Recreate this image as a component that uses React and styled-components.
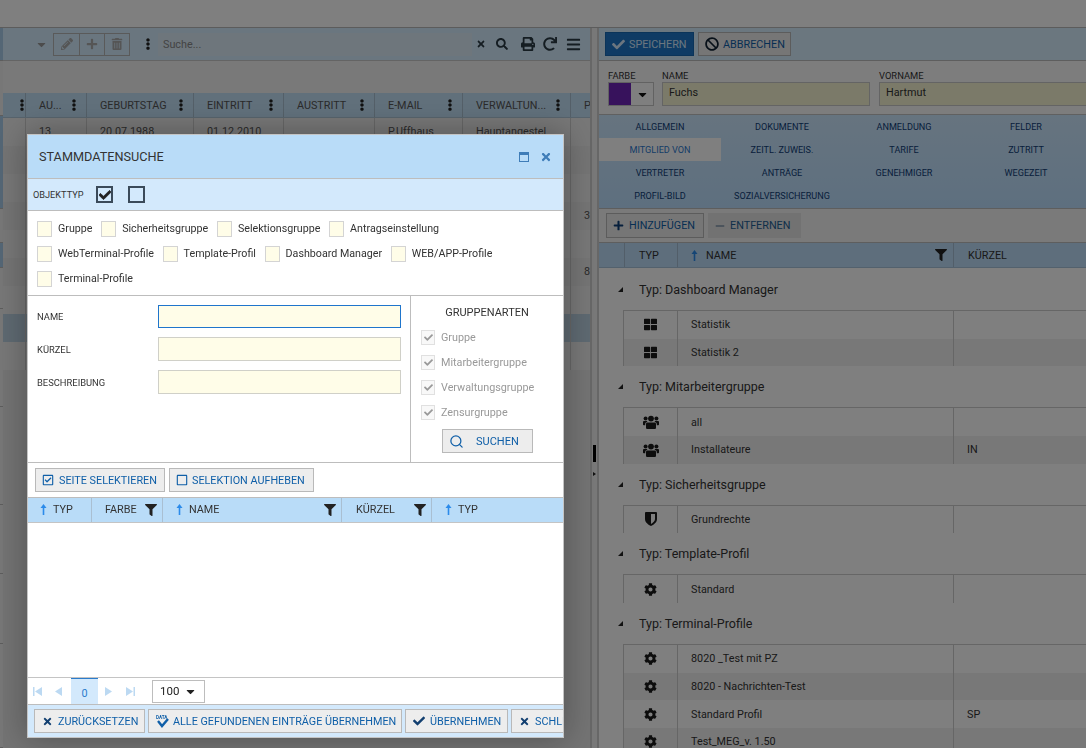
import React from 'react';
import styled, { createGlobalStyle } from 'styled-components';
import {
  FaBan, FaBars, FaCaretDown, FaCheck, FaCog, FaEllipsisV, FaFilter, FaMinus, FaPencilAlt, FaPlus,
  FaPrint, FaRegSquare, FaSearch, FaThLarge, FaTimes, FaTrashAlt, FaRedo, FaRegCheckSquare,
} from 'react-icons/fa';
import { FiSearch } from 'react-icons/fi';

const GlobalStyle = createGlobalStyle`
  html, body { margin: 0; padding: 0; height: 100%; overflow: hidden; }
  body { font-family: Roboto, "Liberation Sans", sans-serif; font-size: 10.8px; color: #333; background: #fff; }
  * { box-sizing: border-box; }
`;

const Page = styled.div`
  width: 1086px;
  height: 748px;
  display: flex;
  flex-direction: column;
  overflow: hidden;
`;

const TopBar = styled.div`
  height: 28px;
  flex: none;
  background: #fff;
  border-bottom: 1px solid #b8b8b8;
`;

const Main = styled.div`
  flex: 1;
  display: flex;
  min-height: 0;
`;

/* linke Seite */
const Rail = styled.div`
  width: 3px;
  flex: none;
  display: flex;
  flex-direction: column;
`;

const RailItem = styled.div`
  flex: none;
  height: ${(p) => p.$h}px;
  background: ${(p) => (p.$on ? '#a9cdea' : '#eee')};
  border-bottom: 1px solid #bbb;
`;

const LeftPane = styled.div`
  width: 587px;
  flex: none;
  display: flex;
  flex-direction: column;
  overflow: hidden;
`;

const LeftToolbar = styled.div`
  height: 33px;
  flex: none;
  display: flex;
  align-items: center;
  background: #d4edff;
  border-bottom: 1px solid #c8c8c8;
  color: #222;
`;

const Caret = styled.div`
  width: 50px;
  padding-left: 32px;
  color: #999;
  display: flex;
  font-size: 13px;
`;

const ToolGroup = styled.div`
  display: flex;
  border: 1px solid #b5b5b5;
  height: 23px;
`;

const ToolBtn = styled.div`
  width: 25px;
  display: flex;
  align-items: center;
  justify-content: center;
  color: #aaa;
  font-size: 12px;
  & + & { border-left: 1px solid #b5b5b5; }
`;

const Kebab = styled(FaEllipsisV)`
  font-size: 12px;
  color: #222;
  flex: none;
`;

const KebabSlot = styled.div`
  width: 28px;
  padding-right: 4px;
  display: flex;
  justify-content: flex-end;
  flex: none;
`;

const SearchBox = styled.div`
  width: 314px;
  height: 23px;
  padding-left: 5px;
  display: flex;
  align-items: center;
  background: #dcecf8;
  color: #888;
`;

const ToolIcons = styled.div`
  display: flex;
  align-items: center;
  color: #2a3a45;
`;

const ToolIcon = styled.span`
  width: ${(p) => p.$w}px;
  display: flex;
  justify-content: center;
  font-size: ${(p) => p.$size || 14}px;
`;

const LeftSpacer = styled.div`
  height: 32px;
  flex: none;
  background: #f2f2f2;
`;

const LeftRow = styled.div`
  height: ${(p) => p.$h || 28}px;
  flex: none;
  display: grid;
  grid-template-columns: 22px 61px 107px 90px 91px 88px 108px 20px;
  background: ${(p) => (p.$selected ? '#bcd2e2' : p.$alt ? '#e8e8e8' : '#eeeeee')};
`;

const LeftHead = styled(LeftRow)`
  background: #c2e0f6;
  border-bottom: 1px solid #aec6d8;
`;

const LeftHeadCell = styled.div`
  display: flex;
  align-items: center;
  justify-content: space-between;
  padding: 0 6px 0 13px;
  border-left: ${(p) => (p.$first ? 'none' : '1px solid #a8bfd0')};
  color: #555;
  overflow: hidden;
  white-space: nowrap;
`;

const LeftCell = styled.div`
  padding: 0 0 0 13px;
  line-height: 27px;
  border-left: ${(p) => (p.$first ? 'none' : '1px solid #cccccc')};
  color: #555;
  overflow: hidden;
  white-space: nowrap;
`;

const LeftRest = styled.div`
  flex: 1;
  background: #e6e6e6;
`;

const Splitter = styled.div`
  width: 9px;
  flex: none;
  padding-top: 417px;
  display: flex;
  flex-direction: column;
  align-items: center;
  gap: 10px;
  background: #f0f0f0;
  border-left: 2px solid #cfcfcf;
  border-right: 2px solid #cfcfcf;
`;

const Handle = styled.div`
  width: 3px;
  height: 17px;
  background: #000;
`;

const SplitArrow = styled.div`
  width: 0;
  height: 0;
  border-left: 3px solid #222;
  border-top: 2px solid transparent;
  border-bottom: 2px solid transparent;
`;

/* rechte Seite */
const RightPane = styled.div`
  flex: 1;
  min-width: 0;
  display: flex;
  flex-direction: column;
  overflow: hidden;
  background: #fff;
`;

const ActionBar = styled.div`
  height: ${(p) => p.$h}px;
  flex: none;
  display: flex;
  align-items: center;
  gap: 4px;
  padding-left: ${(p) => p.$pad}px;
  background: ${(p) => p.$bg};
  border-bottom: 1px solid #bcbcbc;
`;

const Button = styled.div`
  height: ${(p) => p.$h || 24}px;
  width: ${(p) => (p.$w ? `${p.$w}px` : 'auto')};
  flex: none;
  display: flex;
  align-items: center;
  gap: ${(p) => p.$gap || 5}px;
  padding: 0 6px;
  font-size: ${(p) => p.$size || 10.8}px;
  white-space: nowrap;
  color: ${(p) => (p.$primary ? '#d8ecff' : p.$muted ? '#1d5e94' : '#0f5fa8')};
  background: ${(p) => (p.$primary ? '#1f77c8' : p.$muted ? '#e4e4e4' : '#ededed')};
  border: 1px solid ${(p) => (p.$primary ? '#1768b3' : p.$muted ? '#e4e4e4' : '#b9b9b9')};
  svg { flex: none; }
`;

const FieldsRow = styled.div`
  height: 54px;
  flex: none;
  display: flex;
  padding: 8px 0 0 9px;
  background: #fbfbfb;
  border-bottom: 1px solid #c0c0c0;
`;

const Field = styled.div`
  width: ${(p) => p.$w}px;
  margin-right: ${(p) => p.$mr || 0}px;
  flex: none;
`;

const FieldLabel = styled.div`
  font-size: 9.4px;
  line-height: 12px;
  height: 12px;
  margin-top: 1px;
  color: #333;
`;

const ColorPick = styled.div`
  height: 24px;
  display: flex;
  border: 1px solid #c4c4c4;
  background: #fff;
`;

const Swatch = styled.div`
  width: 22px;
  background: #6e25b8;
`;

const PickArrow = styled.div`
  flex: 1;
  display: flex;
  align-items: center;
  justify-content: center;
  font-size: 13px;
  color: #111;
`;

const ValueInput = styled.div`
  height: 24px;
  padding-left: 6px;
  line-height: 20px;
  color: #333;
  background: #f6f5d2;
  border: 1px solid #c8c8c8;
`;

const Tabs = styled.div`
  height: 94px;
  flex: none;
  display: grid;
  grid-template-columns: repeat(4, 122px);
  grid-template-rows: 23px 23px 23px 24px;
  background: linear-gradient(#cde8ff, #bcdfff);
  border-bottom: 1px solid #bcbcbc;
`;

const Tab = styled.div`
  display: flex;
  align-items: center;
  justify-content: center;
  font-size: 9.1px;
  white-space: nowrap;
  color: ${(p) => (p.$active ? '#2c7ad0' : '#103e78')};
  background: ${(p) => (p.$active ? '#fff' : 'transparent')};
`;

const GroupHead = styled.div`
  height: 25px;
  flex: none;
  display: grid;
  grid-template-columns: 25px 53px 276px 1fr;
  background: #bcdcf8;
  border-bottom: 1px solid #a7c3da;
`;

const GroupHeadCell = styled.div`
  display: flex;
  align-items: center;
  gap: 8px;
  padding-left: ${(p) => p.$pad || 0}px;
  border-left: ${(p) => (p.$first ? 'none' : '1px solid #a4bdd2')};
  color: #333;
`;

const SortArrow = styled.svg`
  width: 7px;
  height: 11px;
  flex: none;
  color: #2b8bea;
`;

const FilterIcon = styled(FaFilter)`
  font-size: 12px;
  color: #222;
  margin-left: auto;
  margin-right: ${(p) => p.$mr || 5}px;
  flex: none;
`;

const GroupList = styled.div`
  flex: 1;
  padding: 1px 0 0 24px;
  overflow: hidden;
`;

const GroupTitle = styled.div`
  height: 41px;
  display: flex;
  align-items: center;
  gap: 16px;
  margin-left: -5px;
  font-size: 12.5px;
  color: #333;
`;

const Collapse = styled.div`
  width: 0;
  height: 0;
  border-bottom: 5px solid #222;
  border-left: 5px solid transparent;
`;

const GroupTable = styled.div`
  border-top: 1px solid #cdcdcd;
`;

const DataRow = styled.div`
  height: 27.67px;
  display: grid;
  grid-template-columns: 54px 276px 1fr;
  background: ${(p) => (p.$alt ? '#f1f1f1' : '#fff')};
`;

const DataCell = styled.div`
  display: flex;
  align-items: center;
  justify-content: ${(p) => (p.$center ? 'center' : 'flex-start')};
  padding-left: ${(p) => (p.$center ? 0 : 13)}px;
  border-left: 1px solid #cdcdcd;
  color: #333;
  white-space: nowrap;
`;

const RowIcon = styled.span`
  display: flex;
  font-size: 13px;
  color: #1a1a1a;
`;

/* Dialog */
const Overlay = styled.div`
  position: fixed;
  inset: 0;
  background: rgba(0, 0, 0, 0.5);
`;

const Modal = styled.div`
  position: fixed;
  left: 27px;
  top: 134px;
  width: 537px;
  height: 604px;
  display: flex;
  flex-direction: column;
  background: #fff;
  border: 1px solid #c4c4c4;
  box-shadow: 0 0 30px rgba(0, 0, 0, 0.3);
  overflow: hidden;
`;

const ModalTitle = styled.div`
  height: 44px;
  flex: none;
  display: flex;
  align-items: center;
  padding: 0 11px;
  background: #b9dcf8;
  border-bottom: 1px solid #bdbdbd;
  font-size: 12.7px;
  color: #333;
`;

const TitleName = styled.div`
  flex: 1;
`;

const TitleIcons = styled.div`
  display: flex;
  align-items: center;
  gap: 11px;
  color: #3f7db8;
`;

const TypeRow = styled.div`
  height: 32px;
  flex: none;
  display: flex;
  align-items: center;
  padding-left: 5px;
  background: #d3e9fc;
  border-bottom: 1px solid #bdbdbd;
  font-size: 9.2px;
  color: #333;
`;

const TypeLabel = styled.div`
  width: 63px;
`;

const TypeBox = styled.div`
  width: 17px;
  height: 17px;
  margin-right: 15px;
  display: flex;
  align-items: center;
  justify-content: center;
  border: 2px solid #3a4a5a;
  font-size: 12px;
  color: #222;
  svg { stroke: currentColor; stroke-width: 30; }
`;

const TypeChecks = styled.div`
  height: 85px;
  flex: none;
  padding: 5px 9px 0;
  display: flex;
  flex-wrap: wrap;
  align-content: flex-start;
  gap: 0 8.7px;
  border-bottom: 1px solid #bdbdbd;
`;

const TypeCheck = styled.div`
  height: 25px;
  display: flex;
  align-items: center;
  gap: 6px;
  font-size: 10.7px;
  color: #333;
  white-space: nowrap;
`;

const Break = styled.div`
  flex-basis: 100%;
`;

const YellowBox = styled.div`
  width: 15px;
  height: 16px;
  flex: none;
  background: #fffde8;
  border: 1px solid #d4d4d4;
`;

const SearchArea = styled.div`
  height: 167px;
  flex: none;
  display: flex;
  border-bottom: 1px solid #bdbdbd;
`;

const SearchFields = styled.div`
  width: 383px;
  flex: none;
  padding: 9px 9px 0;
  display: flex;
  flex-direction: column;
  gap: 9px;
  border-right: 1px solid #bdbdbd;
`;

const SearchRow = styled.div`
  display: flex;
  align-items: center;
  font-size: 9.4px;
  color: #333;
`;

const SearchLabel = styled.div`
  width: 121px;
`;

const SearchInput = styled.div`
  width: 243px;
  height: ${(p) => (p.$focus ? 23 : 24)}px;
  background: #fffde8;
  border: 1px solid ${(p) => (p.$focus ? '#1f75cc' : '#d0d0c8')};
`;

const GroupTypes = styled.div`
  flex: 1;
  padding: 10px 10px 0;
  display: flex;
  flex-direction: column;
`;

const GroupTypesTitle = styled.div`
  text-align: center;
  margin-bottom: 6px;
  color: #333;
  font-size: 11px;
  line-height: 13px;
`;

const GroupType = styled.div`
  height: 25px;
  display: flex;
  align-items: center;
  gap: 6px;
  color: #999;
`;

const DisabledBox = styled.div`
  width: 14px;
  height: 15px;
  display: flex;
  align-items: center;
  justify-content: center;
  font-size: 9px;
  color: #999;
  background: #f8f8f8;
  border: 1px solid #e0e0e0;
`;

const SearchButton = styled(Button)`
  margin: 4px 0 0 21px;
  padding-left: 6px;
`;

const SelectBar = styled.div`
  height: 35px;
  flex: none;
  display: flex;
  align-items: center;
  gap: 4px;
  padding-left: 7px;
  border-bottom: 1px solid #bdbdbd;
`;

const ResultHead = styled.div`
  height: 25px;
  flex: none;
  display: grid;
  grid-template-columns: 63px 71px 179px 90px 1fr;
  background: #b9dcf8;
  border-bottom: 1px solid #c4c4c4;
`;

const ResultCell = styled.div`
  display: flex;
  align-items: center;
  gap: 6px;
  padding: 0 0 1px ${(p) => p.$pad}px;
  border-left: ${(p) => (p.$first ? 'none' : '1px solid #a9bfd2')};
  color: #333;
`;

const ResultBody = styled.div`
  flex: 1;
  border-bottom: 1px solid #c4c4c4;
`;

const Pager = styled.div`
  height: 27px;
  flex: none;
  display: flex;
  align-items: center;
  padding-left: 5px;
  border-bottom: 1px solid #bdbdbd;
`;

const PageIcon = styled.svg`
  width: 9px;
  height: 9px;
  flex: none;
  fill: #bcd9f2;
  margin-right: ${(p) => p.$mr}px;
`;

const PageCurrent = styled.div`
  width: 27px;
  height: 26px;
  margin-right: 6px;
  padding-top: 3px;
  display: flex;
  align-items: center;
  justify-content: center;
  flex: none;
  color: #2b7ccc;
  background: #d3e9fc;
  border-top: 1px solid #2b7ccc;
`;

const PageSize = styled.div`
  width: 53px;
  height: 23px;
  margin-left: 17px;
  padding: 0 7px;
  display: flex;
  align-items: center;
  justify-content: space-between;
  font-size: 11.5px;
  color: #222;
  border: 1px solid #bdbdbd;
`;

const Footer = styled.div`
  height: 32px;
  flex: none;
  display: flex;
  align-items: center;
  gap: 3px;
  padding-left: 6px;
  background: #d3e9fc;
  & > div { padding-left: 7px; }
`;

const DataBadge = styled.svg`
  width: 14px;
  height: 14px;
  flex: none;
  color: #0f5fa8;
`;

const Arrow = () => (
  <SortArrow viewBox="0 0 7 11">
    <path d="M3.5 0 L6.5 4 H4.3 V11 H2.7 V4 H0.5 Z" fill="currentColor" />
  </SortArrow>
);

const UsersIcon = () => (
  <svg width="16" height="14" viewBox="0 0 16 14" fill="currentColor">
    <circle cx="8" cy="3.6" r="2.9" />
    <circle cx="2.6" cy="3.4" r="2" />
    <circle cx="13.4" cy="3.4" r="2" />
    <path d="M4.2 7.4 H11.8 C12.6 7.4 13 8 13 9 V12.4 C13 13.3 12.4 14 11.6 14 H4.4 C3.6 14 3 13.3 3 12.4 V9 C3 8 3.4 7.4 4.2 7.4Z" />
    <path d="M0 7 C0 6.2 .6 5.9 1.2 5.9 H3.8 C4.4 6.4 4.6 6.6 4 6.9 C2.8 7.2 2.2 8 2.2 9.4 V10.2 H.8 C.3 10.2 0 9.9 0 9.4Z" />
    <path d="M16 7 C16 6.2 15.4 5.9 14.8 5.9 H12.2 C11.6 6.4 11.4 6.6 12 6.9 C13.2 7.2 13.8 8 13.8 9.4 V10.2 H15.2 C15.7 10.2 16 9.9 16 9.4Z" />
  </svg>
);

const ShieldIcon = () => (
  <svg width="12" height="14" viewBox="0 0 12 14" fill="currentColor">
    <path
      fillRule="evenodd"
      d="M1 0 H11 C11.5 0 12 .5 12 1 V7 C12 10.5 8.5 12.8 6 14 C3.5 12.8 0 10.5 0 7 V1 C0 .5 .5 0 1 0Z M6 2 V12 C8 10.8 10 9.2 10 7 V2Z"
    />
  </svg>
);

const leftCols = ['', 'AU...', 'GEBURTSTAG', 'EINTRITT', 'AUSTRITT', 'E-MAIL', 'VERWALTUN...', 'P'];
const leftRows = [
  ['', '13', '20.07.1988', '01.12.2010', '', 'P.Uffhaus', 'Hauptangestel', ''],
  [], [],
  ['', '', '', '', '', '', '', '3'],
  [],
  ['', '', '', '', '', '', '', '8'],
  [], [], [],
];
const railItems = [[33, true], [55, false], [93, true], [34, false], [25, true], [41, false], [98, false], [98, false], [69, false], [70, false], [104, false]];

const tabs = [
  'ALLGEMEIN', 'DOKUMENTE', 'ANMELDUNG', 'FELDER',
  'MITGLIED VON', 'ZEITL. ZUWEIS.', 'TARIFE', 'ZUTRITT',
  'VERTRETER', 'ANTRÄGE', 'GENEHMIGER', 'WEGEZEIT',
  'PROFIL-BILD', 'SOZIALVERSICHERUNG',
];

const groups = [
  { title: 'Typ: Dashboard Manager', icon: <FaThLarge />, rows: [['Statistik', ''], ['Statistik 2', '']] },
  { title: 'Typ: Mitarbeitergruppe', icon: <UsersIcon />, rows: [['all', ''], ['Installateure', 'IN']] },
  { title: 'Typ: Sicherheitsgruppe', icon: <ShieldIcon />, rows: [['Grundrechte', '']] },
  { title: 'Typ: Template-Profil', icon: <FaCog />, rows: [['Standard', '']] },
  {
    title: 'Typ: Terminal-Profile',
    icon: <FaCog />,
    rows: [['8020 _Test mit PZ', ''], ['8020 - Nachrichten-Test', ''], ['Standard Profil', 'SP'], ['Test_MEG_v. 1.50', '']],
  },
];

const typeRows = [
  ['Gruppe', 'Sicherheitsgruppe', 'Selektionsgruppe', 'Antragseinstellung'],
  ['WebTerminal-Profile', 'Template-Profil', 'Dashboard Manager', 'WEB/APP-Profile'],
  ['Terminal-Profile'],
];

const App = () => (
  <>
    <GlobalStyle />
    <Page>
      <TopBar />
      <Main>
        <Rail>
          {railItems.map(([h, on], i) => <RailItem key={i} $h={h} $on={on} />)}
        </Rail>
        <LeftPane>
          <LeftToolbar>
            <Caret><FaCaretDown /></Caret>
            <ToolGroup>
              <ToolBtn><FaPencilAlt /></ToolBtn>
              <ToolBtn><FaPlus /></ToolBtn>
              <ToolBtn><FaTrashAlt /></ToolBtn>
            </ToolGroup>
            <KebabSlot><Kebab /></KebabSlot>
            <SearchBox>Suche...</SearchBox>
            <ToolIcons>
              <ToolIcon $w={18} $size={10}><FaTimes /></ToolIcon>
              <ToolIcon $w={24} $size={12}><FaSearch /></ToolIcon>
              <ToolIcon $w={28}><FaPrint /></ToolIcon>
              <ToolIcon $w={16}><FaRedo /></ToolIcon>
              <ToolIcon $w={30} $size={15}><FaBars /></ToolIcon>
            </ToolIcons>
          </LeftToolbar>
          <LeftSpacer />
          <LeftHead $h={25}>
            {leftCols.map((c, i) => (
              <LeftHeadCell key={i} $first={i === 0}>
                {c}
                {i < 7 && <Kebab />}
              </LeftHeadCell>
            ))}
          </LeftHead>
          {leftRows.map((r, i) => (
            <LeftRow key={i} $alt={i % 2 === 1} $selected={i === 7}>
              {leftCols.map((_, j) => <LeftCell key={j} $first={j === 0}>{r[j] || ''}</LeftCell>)}
            </LeftRow>
          ))}
          <LeftRest />
        </LeftPane>
        <Splitter>
          <Handle />
          <SplitArrow />
        </Splitter>
        <RightPane>
          <ActionBar $h={33} $pad={6} $bg="#d6eeff">
            <Button $primary $w={89} $gap={4}><FaCheck size={13} />SPEICHERN</Button>
            <Button $w={93} $gap={4}><FaBan size={14} color="#123" />ABBRECHEN</Button>
          </ActionBar>
          <FieldsRow>
            <Field $w={46} $mr={8}>
              <FieldLabel>FARBE</FieldLabel>
              <ColorPick>
                <Swatch />
                <PickArrow><FaCaretDown /></PickArrow>
              </ColorPick>
            </Field>
            <Field $w={208} $mr={9}>
              <FieldLabel>NAME</FieldLabel>
              <ValueInput>Fuchs</ValueInput>
            </Field>
            <Field $w={260}>
              <FieldLabel>VORNAME</FieldLabel>
              <ValueInput>Hartmut</ValueInput>
            </Field>
          </FieldsRow>
          <Tabs>
            {tabs.map((t) => <Tab key={t} $active={t === 'MITGLIED VON'}>{t}</Tab>)}
          </Tabs>
          <ActionBar $h={34} $pad={7} $bg="#f4f4f4">
            <Button $w={98} $h={25}><FaPlus size={11} color="#0d3f78" />HINZUFÜGEN</Button>
            <Button $muted $w={93} $h={25}><FaMinus size={10} color="#98a8b8" />ENTFERNEN</Button>
          </ActionBar>
          <GroupHead>
            <GroupHeadCell $first />
            <GroupHeadCell $pad={14}>TYP</GroupHeadCell>
            <GroupHeadCell $pad={13}><Arrow />NAME<FilterIcon $mr={6} /></GroupHeadCell>
            <GroupHeadCell $pad={14}>KÜRZEL</GroupHeadCell>
          </GroupHead>
          <GroupList>
            {groups.map((g) => (
              <div key={g.title}>
                <GroupTitle><Collapse />{g.title}</GroupTitle>
                <GroupTable>
                  {g.rows.map(([name, short], i) => (
                    <DataRow key={name} $alt={i % 2 === 1}>
                      <DataCell $center><RowIcon>{g.icon}</RowIcon></DataCell>
                      <DataCell>{name}</DataCell>
                      <DataCell>{short}</DataCell>
                    </DataRow>
                  ))}
                </GroupTable>
              </div>
            ))}
          </GroupList>
        </RightPane>
      </Main>
    </Page>
    <Overlay />
    <Modal>
      <ModalTitle>
        <TitleName>STAMMDATENSUCHE</TitleName>
        <TitleIcons>
          <svg width="10" height="10" viewBox="0 0 10 10">
            <path d="M0 0H10V10H0Z M1 3V9H9V3Z" fill="currentColor" fillRule="evenodd" />
          </svg>
          <FaTimes size={12} />
        </TitleIcons>
      </ModalTitle>
      <TypeRow>
        <TypeLabel>OBJEKTTYP</TypeLabel>
        <TypeBox><FaCheck /></TypeBox>
        <TypeBox />
      </TypeRow>
      <TypeChecks>
        {typeRows.map((row, i) => (
          <React.Fragment key={i}>
            {row.map((t) => <TypeCheck key={t}><YellowBox />{t}</TypeCheck>)}
            <Break />
          </React.Fragment>
        ))}
      </TypeChecks>
      <SearchArea>
        <SearchFields>
          <SearchRow><SearchLabel>NAME</SearchLabel><SearchInput $focus /></SearchRow>
          <SearchRow><SearchLabel>KÜRZEL</SearchLabel><SearchInput /></SearchRow>
          <SearchRow><SearchLabel>BESCHREIBUNG</SearchLabel><SearchInput /></SearchRow>
        </SearchFields>
        <GroupTypes>
          <GroupTypesTitle>GRUPPENARTEN</GroupTypesTitle>
          {['Gruppe', 'Mitarbeitergruppe', 'Verwaltungsgruppe', 'Zensurgruppe'].map((t) => (
            <GroupType key={t}><DisabledBox><FaCheck /></DisabledBox>{t}</GroupType>
          ))}
          <SearchButton $w={91} $gap={12} $size={11}><FiSearch size={15} />SUCHEN</SearchButton>
        </GroupTypes>
      </SearchArea>
      <SelectBar>
        <Button $w={130}><FaRegCheckSquare size={12} />SEITE SELEKTIEREN</Button>
        <Button $w={145} $gap={4}><FaRegSquare size={12} />SELEKTION AUFHEBEN</Button>
      </SelectBar>
      <ResultHead>
        <ResultCell $first $pad={12}><Arrow />TYP</ResultCell>
        <ResultCell $pad={13}>FARBE<FilterIcon /></ResultCell>
        <ResultCell $pad={13}><Arrow />NAME<FilterIcon /></ResultCell>
        <ResultCell $pad={14}>KÜRZEL<FilterIcon /></ResultCell>
        <ResultCell $pad={13}><Arrow />TYP</ResultCell>
      </ResultHead>
      <ResultBody />
      <Pager>
        <PageIcon viewBox="0 0 9 9" $mr={12}><path d="M0 0H1.5V9H0Z M9 0V9L2 4.5Z" /></PageIcon>
        <PageIcon viewBox="0 0 9 9" $mr={8}><path d="M8 0V9L1 4.5Z" /></PageIcon>
        <PageCurrent>0</PageCurrent>
        <PageIcon viewBox="0 0 9 9" $mr={13}><path d="M1 0V9L8 4.5Z" /></PageIcon>
        <PageIcon viewBox="0 0 9 9" $mr={0}><path d="M0 0V9L7 4.5Z M7.5 0H9V9H7.5Z" /></PageIcon>
        <PageSize>100<FaCaretDown size={13} /></PageSize>
      </Pager>
      <Footer>
        <Button $w={111}><FaTimes size={11} color="#123f70" />ZURÜCKSETZEN</Button>
        <Button $w={254} $gap={3}>
          <DataBadge viewBox="0 0 14 14">
            <text x="0" y="4.5" fontSize="4.6" fontWeight="700" fontFamily="Roboto" fill="currentColor">DATA</text>
            <path d="M2 7 L6 12 L12 5" fill="none" stroke="currentColor" strokeWidth="2.4" />
          </DataBadge>
          ALLE GEFUNDENEN EINTRÄGE ÜBERNEHMEN
        </Button>
        <Button $w={103}><FaCheck size={12} color="#123f70" />ÜBERNEHMEN</Button>
        <Button $w={90}><FaTimes size={11} color="#123f70" />SCHLIESSEN</Button>
      </Footer>
    </Modal>
  </>
);

export default App;
